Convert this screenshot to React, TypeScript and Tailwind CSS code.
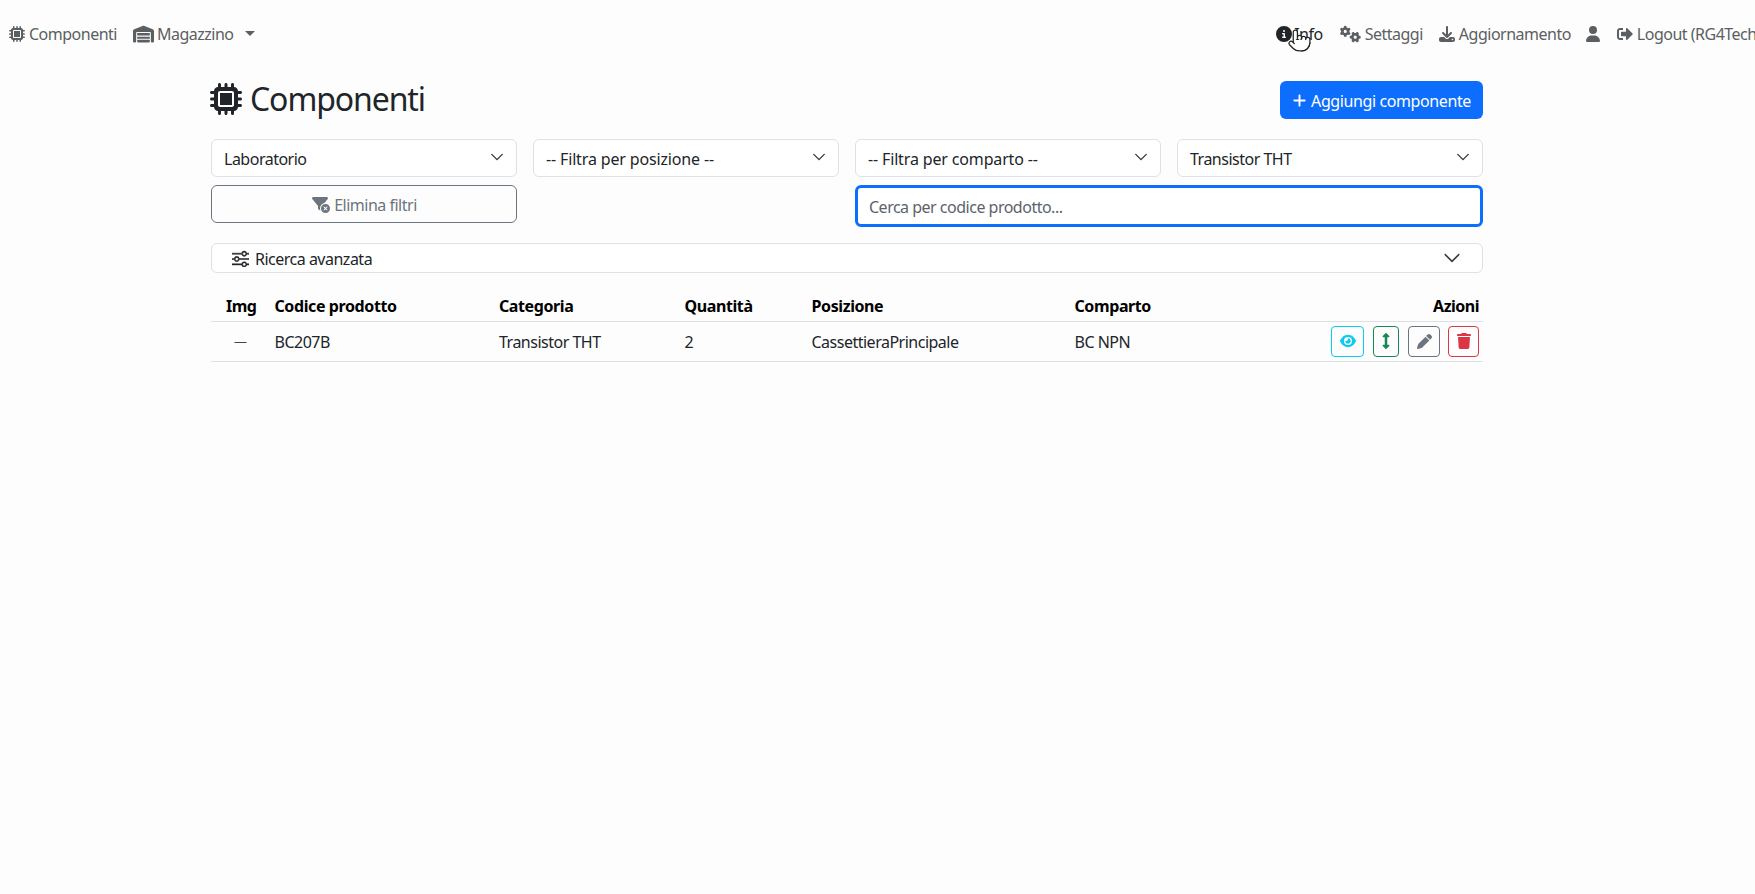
import { Pointer } from 'lucide-react';
import { FaArrowsAltV, FaSignOutAlt } from 'react-icons/fa';
import {
  FaCircleInfo,
  FaDownload,
  FaEye,
  FaFilterCircleXmark,
  FaGears,
  FaMicrochip,
  FaPen,
  FaPlus,
  FaTrash,
  FaUser,
  FaWarehouse,
} from 'react-icons/fa6';
import { BsSliders } from 'react-icons/bs';

const Chevron = ({ big = false }: { big?: boolean }) => (
  <svg viewBox="0 0 16 16" className={big ? 'h-[18px] w-[18px]' : 'h-[14px] w-[14px]'} fill="none" stroke="#343a40" strokeWidth={big ? 1.3 : 1.6} strokeLinecap="round" strokeLinejoin="round">
    <path d="m2 5 6 6 6-6" />
  </svg>
);

const FilterSelect = ({ label, dashed = false }: { label: string; dashed?: boolean }) => (
  <div className="flex h-[38px] items-center justify-between rounded-md border border-[#dee2e6] bg-white pl-3 pr-[12px] text-[#212529]">
    <span className={dashed ? 'mt-px tracking-[-0.15px]' : 'mt-px'}>{label}</span>
    <span className="-mt-0.5">
      <Chevron />
    </span>
  </div>
);

const actions = [
  { key: 'view', icon: <FaEye className="h-4 w-4" />, cls: 'w-[33px] border-[#0dcaf0] text-[#0dcaf0]' },
  { key: 'move', icon: <FaArrowsAltV className="h-4 w-4" />, cls: 'w-[26px] border-[#198754] text-[#198754]' },
  { key: 'edit', icon: <FaPen className="h-[15px] w-[15px]" />, cls: 'w-[32px] border-[#6c757d] text-[#6c757d]' },
  { key: 'delete', icon: <FaTrash className="h-4 w-4" />, cls: '-ml-px w-[31px] border-[#dc3545] text-[#dc3545]' },
];

const headers = ['Codice prodotto', 'Categoria', 'Quantità', 'Posizione', 'Comparto'];
const cols = ['w-[224.5px]', 'w-[185.5px]', 'w-[127px]', 'w-[263px]', 'w-[120px]'];
const cells = ['BC207B', 'Transistor THT', '2', 'CassettieraPrincipale', 'BC NPN'];

export default function App() {
  return (
    <div className="min-h-[894px] overflow-hidden bg-[#fdfdfd] font-['Noto_Sans',sans-serif] text-base tracking-[-0.5px] text-[#212529]">
      {/* navbar */}
      <nav className="flex h-[67px] w-[1761px] items-center justify-between pl-[9px] text-[#5c5f62]">
        <div className="flex items-center">
          <a className="flex items-center gap-[4px]">
            <FaMicrochip className="h-4 w-4" />
            Componenti
          </a>
          <a className="ml-[16px] flex items-center gap-[3px]">
            <FaWarehouse className="h-[18px] w-[21px]" />
            Magazzino
            <span className="ml-2 h-0 w-0 border-x-[5px] border-t-[5px] border-x-transparent border-t-[#5c5f62]" />
          </a>
        </div>
        <div className="relative flex items-center">
          <a className="flex items-center gap-[2px] text-[#212529]">
            <FaCircleInfo className="h-4 w-4" />
            Info
          </a>
          <a className="ml-[17px] flex items-center gap-[4px]">
            <FaGears className="h-[18px] w-[21px]" />
            Settaggi
          </a>
          <a className="ml-[16px] flex items-center gap-[4px]">
            <FaDownload className="h-4 w-4" />
            Aggiornamento
          </a>
          <a className="ml-[14px] flex items-center">
            <FaUser className="h-4 w-4" />
          </a>
          <a className="ml-[16px] flex items-center gap-[4px]">
            <FaSignOutAlt className="h-4 w-4" />
            Logout (RG4Tech)
          </a>
          <Pointer className="absolute left-[11px] top-[5px] h-[27px] w-[25px] fill-white text-[#222]" strokeWidth={1.2} />
        </div>
      </nav>

      <main className="mt-[7px] w-[1694px]">
        <div className="mx-auto w-[1274px]">
          <div className="flex h-[52px] items-center justify-between">
            <h1 className="-mt-0.5 flex items-center gap-2 text-[32px] leading-none tracking-[-1.1px]">
              <FaMicrochip className="h-8 w-8" />
              Componenti
            </h1>
            <button className="mr-px flex h-[38px] w-[203px] items-center justify-center gap-1 rounded-md bg-[#0d6efd] pt-px tracking-[-0.4px] text-white">
              <FaPlus className="h-[15px] w-[15px]" />
              Aggiungi componente
            </button>
          </div>

          <div className="mt-[13px] grid grid-cols-4 gap-x-4 gap-y-2 px-px">
            <FilterSelect label="Laboratorio" />
            <FilterSelect label="-- Filtra per posizione --" dashed />
            <FilterSelect label="-- Filtra per comparto --" dashed />
            <FilterSelect label="Transistor THT" />
            <button className="flex h-[38px] items-center justify-center gap-[3px] rounded-md border border-[#6c757d] pt-0.5 text-[#6c757d]">
              <FaFilterCircleXmark className="h-4 w-[20px]" />
              Elimina filtri
            </button>
            <div />
            <div className="col-span-2 flex h-[42px] items-center rounded-md border-[3px] border-[#0d6efd] bg-white px-[11px] pt-0.5 text-[#5c636a]">
              Cerca per codice prodotto...
            </div>
          </div>

          <div className="mx-px mt-[16px] flex h-[30px] items-center justify-between rounded-md border border-[#dee2e6] bg-white pl-5 pr-[21px]">
            <span className="flex items-center gap-[6px]">
              <BsSliders className="h-[17px] w-[17px]" stroke="currentColor" strokeWidth={0.5} />
              <span className="mt-0.5">Ricerca avanzata</span>
            </span>
            <Chevron big />
          </div>

          <table className="ml-px mt-[14px] w-[1272px] table-fixed border-collapse">
            <thead>
              <tr className="h-[34px] border-b border-[#dee2e6] text-black">
                <th className="w-[63.5px] pl-[15px] pt-1 text-left font-bold">Img</th>
                {headers.map((h, i) => (
                  <th key={h} className={`${cols[i]} pt-1 text-left font-bold tracking-[-0.4px]`}>
                    {h}
                  </th>
                ))}
                <th className="pr-1 pt-1 text-right font-bold">Azioni</th>
              </tr>
            </thead>
            <tbody>
              <tr className="h-[40px] border-b border-[#dee2e6]">
                <td className="pl-[23px] pt-0.5 text-[13px] text-[#444]">—</td>
                {cells.map((c) => (
                  <td key={c} className="pt-0.5">{c}</td>
                ))}
                <td>
                  <div className="flex justify-end gap-[9px] pr-[4px]">
                    {actions.map((a) => (
                      <button key={a.key} className={`flex h-[31px] items-center justify-center rounded border ${a.cls}`}>
                        {a.icon}
                      </button>
                    ))}
                  </div>
                </td>
              </tr>
            </tbody>
          </table>
        </div>
      </main>
    </div>
  );
}
